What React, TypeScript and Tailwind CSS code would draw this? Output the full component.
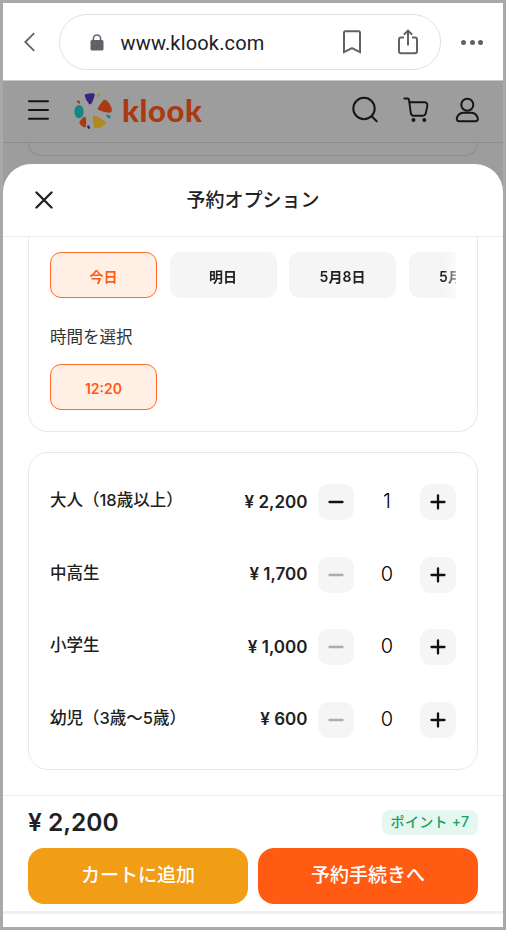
import React, { useState } from "react";
import clsx from "clsx";

const tickets = [
	{ name: "大人（18歳以上）", price: "2,200", count: 1 },
	{ name: "中高生", price: "1,700", count: 0 },
	{ name: "小学生", price: "1,000", count: 0 },
	{ name: "幼児（3歳〜5歳）", price: "600", count: 0 },
];

const dates = ["今日", "明日", "5月8日", "5月9日"];

function BrowserBar() {
	return (
		<div className="flex h-[78px] shrink-0 items-center border-b border-[#c8c8c8] bg-white text-[#5f6368]">
			<svg className="ml-5 h-5 w-3" viewBox="0 0 12 20" fill="none" stroke="currentColor" strokeWidth="1.8">
				<path d="M11.2 1.2 2.3 10l8.9 8.8" />
			</svg>
			<div className="ml-6 flex h-14 w-[382px] items-center rounded-full border border-[#dfe0e6]">
				<svg className="ml-[30px] mt-px h-[17px] w-[14px]" viewBox="0 0 14 17" fill="none">
					<rect x=".5" y="6" width="13" height="10.5" rx="1.5" fill="currentColor" />
					<path d="M3.4 7V4.6a3.6 3.6 0 0 1 7.2 0V7" stroke="currentColor" strokeWidth="1.6" />
				</svg>
				<span className="ml-[16.5px] w-[150px] pt-0.5 whitespace-nowrap font-['Roboto'] text-[20px] tracking-[0.17px] text-[#202124]">www.klook.com</span>
				<svg className="ml-[72.5px] mt-px h-6 w-[18px]" viewBox="0 0 18 24" fill="none" stroke="currentColor" strokeWidth="2">
					<path d="M1 22.2V2.8Q1 1.2 2.6 1.2h12.8Q17 1.2 17 2.8v19.4l-8-4z" />
				</svg>
				<svg className="ml-[37px] mt-px h-[26px] w-5" viewBox="0 0 20 26" fill="none" stroke="currentColor" strokeWidth="2">
					<path d="M6 8.6H3Q1 8.6 1 10.6v11.6q0 2 2 2h14q2 0 2-2V10.6q0-2-2-2h-3M10 16.5V1.8M5.8 5.8 10 1.6l4.2 4.2" />
				</svg>
			</div>
			<div className="ml-[20px] mt-px flex gap-[3.5px]">
				<span className="size-[5px] rounded-full bg-[#5f6368]" />
				<span className="size-[5px] rounded-full bg-[#5f6368]" />
				<span className="size-[5px] rounded-full bg-[#5f6368]" />
			</div>
		</div>
	);
}

function KlookMark() {
	return (
		<svg className="mt-0.5 ml-[25px] h-[38px] w-[40px]" viewBox="74 92 40 38">
			<path d="M84.8 96q-.6-1.3.9-1.7 3.6-1.3 7.2-1.1 2.4.2 1.7 2.6-1 4.2-3.1 7.6-1 1.6-2.6.3-3-2.6-4.1-7.7z" fill="#392580" />
			<path d="M96.8 96.2q.2-2 1.8-2.5 1.3-.2 1.3.8-.6 1.8-2.3 2.5-.7.1-.8-.8z" fill="#b08a1c" />
			<path d="M98 109.800q-1-1 .1-2.200 2.300-4.100 5-7.200 1.500-1.300 3.400.2 4.200 3.400 5.300 8.700.4 3.500-2.700 3.500-5.500-.4-11.100-3z" fill="#aa3a12" />
			<path d="M106 115.500q0-1.100 1.500-.7 2 .2 3.100 1.300.3 2.100-1.300 2.400-2-.5-3.300-3z" fill="#128787" />
			<path d="M92.800 117q.2-2 2-1.500 5 1.900 9.800 5.700 1.800 1.900-.6 4-3.700 3.500-8.100 3.300-1.700-.4-2-2.100-1.300-4.300-1.100-9.400z" fill="#b08a1c" />
			<path d="M88 124.900q1.300.3 2.200 2.700 0 1.700-1.400 1.400-1.800-.7-1.600-2.200.1-1.500.8-1.900z" fill="#392580" />
			<path d="M79.200 122.600q1.600-3.900 4.500-5.700 2-.7 2.300 1.400.6 4.200 0 8-.5 1.800-2.700.8-3.300-1.600-4.100-4.500z" fill="#aa3a12" />
			<ellipse cx="79" cy="111.600" rx="4.700" ry="6.600" fill="#128787" />
			<path d="M76.500 101.800q.8-1.500 2.200-1.500 1.500 1 1.400 2.800-.6 1-1.500.2-1.200-.7-2.100-1.500z" fill="#aa3a12" />
		</svg>
	);
}

function SiteHeader() {
	return (
		<div className="flex h-[62px] shrink-0 items-center border-b border-[#8c8c8c] pb-1 text-[#151515]">
			<svg className="ml-[25px] h-5 w-[21px]" viewBox="0 0 21 20" fill="none" stroke="currentColor" strokeWidth="2" strokeLinecap="round">
				<path d="M1 1.3h19M1 10h19M1 18.7h19" />
			</svg>
			<KlookMark />
			<span className="ml-2 w-[90px] pt-px whitespace-nowrap font-['Lato'] text-[31px] leading-none font-black tracking-[0.6px] text-[#aa3a12]">klook</span>
			<svg className="ml-[139px] h-[28px] w-[28px]" viewBox="0 0 28 28" fill="none" stroke="currentColor" strokeWidth="2" strokeLinecap="round">
				<circle cx="13" cy="12.5" r="10.7" />
				<path d="m20.7 20.2 5 5" />
			</svg>
			<svg className="ml-[24px] h-[26px] w-[27px]" viewBox="403 96 27 26" fill="none" stroke="currentColor" strokeWidth="1.9" strokeLinecap="round" strokeLinejoin="round">
				<path d="M404.300 97.500h3.200q1.300 0 1.500 1.500l1.800 12.900q.3 2.900 2.900 2.900h9q2.200 0 3-2.200l1.500-7.100q.7-4.200-2.600-4.200h-15.300" />
				<circle cx="413.500" cy="119" r="1" fill="currentColor" />
				<circle cx="424.300" cy="119" r="1" fill="currentColor" />
			</svg>
			<svg className="ml-[25px] h-[26px] w-[24px]" viewBox="455 97 24 26" fill="none" stroke="currentColor" strokeWidth="2">
				<circle cx="467.300" cy="104.700" r="6" />
				<path d="M463.500 112.700h7.600q4.400 0 6.400 4.500 1.200 4-2.400 4.100h-15.600q-3.500-.1-2.400-4.100 2-4.500 6.400-4.500z" />
			</svg>
		</div>
	);
}

function Chip({ label, active = false }: { label: string; active?: boolean }) {
	return (
		<button
			className={clsx(
				"flex h-[46px] w-[107px] shrink-0 items-center justify-center rounded-[11px] pt-[3px] text-[14px] font-semibold",
				active ? "border-[1.5px] border-[#ff6a2c] bg-[#ffefe4] text-[#ff5b16]" : "bg-[#f5f5f5] text-[#212121]",
			)}
		>
			{label}
		</button>
	);
}

function StepButton({ plus = false, disabled = false, onClick }: { plus?: boolean; disabled?: boolean; onClick: () => void }) {
	return (
		<button
			onClick={onClick}
			disabled={disabled}
			className={clsx("flex size-9 items-center justify-center rounded-[11px] bg-[#f5f5f5]", disabled ? "text-[#adadad]" : "text-[#111111]")}
		>
			<svg className="size-4" viewBox="0 0 16 16" fill="none" stroke="currentColor" strokeWidth="2.3" strokeLinecap="round">
				<path d="M1.500 8h13" />
				{plus && <path d="M8 1.500v13" />}
			</svg>
		</button>
	);
}

export default function App() {
	const [counts, setCounts] = useState(tickets.map((t) => t.count));

	const change = (index: number, step: number) => setCounts(counts.map((c, i) => (i === index ? c + step : c)));

	return (
		<div className="flex h-[930px] w-[506px] flex-col overflow-hidden border-3 border-[#a9a9a9] bg-[#9d9d9d] font-['Inter','Noto_Sans_CJK_JP',sans-serif] text-[#212121]">
			<BrowserBar />
			<SiteHeader />
			<div className="h-[21px] shrink-0 px-[25px]">
				<div className="h-[13px] rounded-b-[16px] border border-t-0 border-[#8c8c8c]" />
			</div>

			<div className="flex flex-1 flex-col rounded-t-[28px] bg-white">
				<div className="flex h-[73px] shrink-0 items-center border-b border-[#ebebeb]">
					<svg className="ml-8 size-[18px]" viewBox="0 0 18 18" fill="none" stroke="currentColor" strokeWidth="2.3" strokeLinecap="round">
						<path d="m1.500 1.500 15 15M16.500 1.500l-15 15" />
					</svg>
					<h1 className="flex-1 pt-0.5 pr-[50px] text-center text-[19px] font-medium">予約オプション</h1>
				</div>

				<div className="flex h-[558px] shrink-0 flex-col gap-5 px-[25px]">
					<div className="h-[195px] rounded-b-[20px] border-[1.5px] border-t-0 border-[#e9e9e9] px-[21px] pt-[15px]">
						<div className="flex gap-[12.5px] overflow-hidden [mask-image:linear-gradient(to_right,black_calc(100%-12px),rgba(0,0,0,0.4))]">
							{dates.map((date, i) => (
								<Chip key={date} label={date} active={i === 0} />
							))}
						</div>
						<p className="mt-[26px] mb-[15px] pt-px text-[16.5px] leading-6 text-[#333333]">時間を選択</p>
						<Chip label="12:20" active />
					</div>

					<div className="flex h-[318px] flex-col gap-[36.5px] rounded-[20px] border-[1.5px] border-[#e9e9e9] px-[21px] pt-[31px]">
						{tickets.map((ticket, i) => (
							<div key={ticket.name} className="flex h-9 items-center">
								<span className="flex-1 pb-[3px] text-[16.5px] font-medium">{ticket.name}</span>
								<span className="mr-[10.5px] pt-px text-[17px] font-semibold">¥ {ticket.price}</span>
								<StepButton disabled={counts[i] === 0} onClick={() => change(i, -1)} />
								<span className="w-[66px] pb-0.5 text-center text-[20px] font-light text-black">{counts[i]}</span>
								<StepButton plus onClick={() => change(i, 1)} />
							</div>
						))}
					</div>
				</div>

				<div className="h-[119px] shrink-0 border-t border-b-3 border-t-[#ebebeb] border-b-[#f0f0f0] px-[25px]">
					<div className="flex h-[52px] items-center justify-between">
						<span className="text-[24.5px] font-semibold">¥ 2,200</span>
						<span className="flex h-[25px] w-24 items-center justify-center rounded-lg bg-[#e6f6f0] pb-0.5 text-[14px] font-medium tracking-[0.3px] text-[#16a366]">ポイント +7</span>
					</div>
					<div className="flex gap-2.5 text-[19px] font-medium text-white">
						<button className="h-14 flex-1 rounded-2xl bg-[#f19d15] pt-px">カートに追加</button>
						<button className="h-14 flex-1 rounded-2xl bg-[#ff5b13] pt-px">予約手続きへ</button>
					</div>
				</div>
			</div>
		</div>
	);
}
